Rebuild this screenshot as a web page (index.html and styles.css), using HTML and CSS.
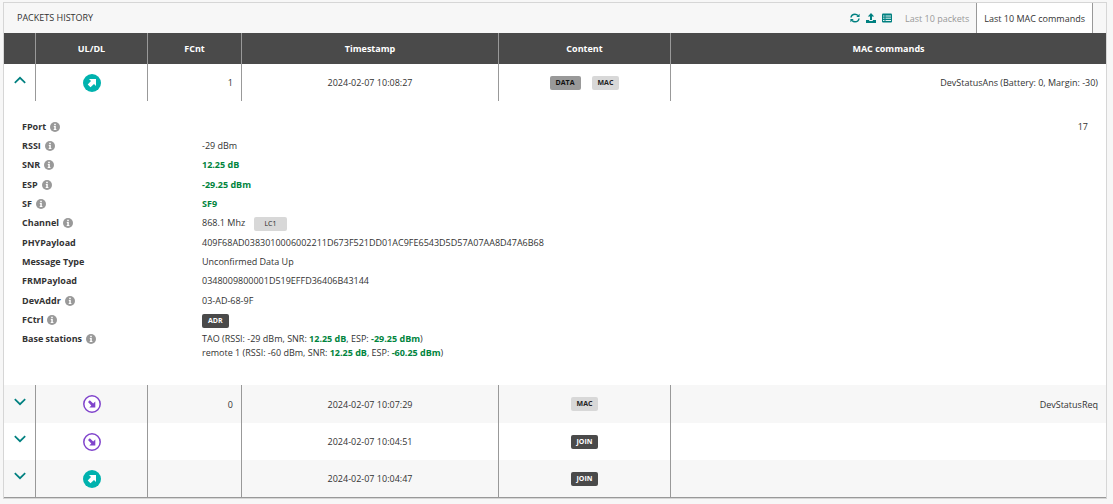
FILE: index.html
```html
<!DOCTYPE html>
<html lang="en">
<head>
  <meta charset="UTF-8" />
  <meta name="viewport" content="width=device-width, initial-scale=1.0" />
  <title>Packets history</title>
  <link rel="stylesheet" href="styles.css">
</head>
<body>
  <svg class="sprite" aria-hidden="true">
    <symbol id="up" viewBox="0 0 18 18">
      <circle cx="9" cy="9" r="9" fill="#00b2ae" />
      <path d="M6 5h7v7l-2-2-3.500 3.300-2.800-2.800L8 7z" fill="#fff" />
    </symbol>
    <symbol id="down" viewBox="0 0 18 18">
      <circle cx="9" cy="9" r="8.200" fill="#fff" stroke="#8044cc" stroke-width="1.500" />
      <path d="M6.800 5.200l3.400 3.400L12.300 6.500v6H6.300l2-2L5 7z" fill="#8044cc" />
    </symbol>
    <symbol id="info" viewBox="0 0 10 10">
      <circle cx="5" cy="5" r="5" fill="#999" />
      <path d="M4.200 1.800h1.600v1.400H4.200zM3.800 4h2v3h.6v1H3.700V7h.6V5h-.5z" fill="#fff" />
    </symbol>
    <symbol id="chevron" viewBox="0 0 12 8">
      <path d="M.8 1.200L6 6.200l5.200-5" fill="none" stroke="#008080" stroke-width="1.700" />
    </symbol>
  </svg>

  <section class="panel">
    <header class="panel-header">
      <h1>PACKETS HISTORY</h1>
      <div class="tools">
        <button class="icon-btn" type="button" aria-label="Refresh">
          <svg viewBox="0 0 10 10"><path d="M1 4.500C1.300 2.500 3 1.200 5 1.200c1.200 0 2.200.5 3 1.300M9 5.500C8.700 7.500 7 8.800 5 8.800c-1.200 0-2.200-.5-3-1.300" fill="none" stroke="#008080" stroke-width="1.500" /><path d="M9.600.7V4H6.300zM.4 9.300V6h3.300z" fill="#008080" /></svg>
        </button>
        <button class="icon-btn" type="button" aria-label="Export">
          <svg viewBox="0 0 10 10"><path d="M5 0l3.200 3.400H6V7H4V3.400H1.800zM0 7h3.200v1h3.600V7H10v3H0z" fill="#008080" /></svg>
        </button>
        <button class="icon-btn" type="button" aria-label="Table view">
          <svg viewBox="0 0 10 10"><rect y=".5" width="10" height="9" rx="1" fill="#008080" /><path d="M1 3h1.500M3.500 3H9M1 5.200h1.500M3.500 5.200H9M1 7.500h1.500M3.500 7.500H9" stroke="#fff" stroke-width=".9" /></svg>
        </button>
      </div>
      <nav class="tabs">
        <button class="tab" type="button">Last 10 packets</button>
        <button class="tab active" type="button">Last 10 MAC commands</button>
      </nav>
    </header>

    <table class="packets">
      <colgroup>
        <col class="col-toggle"><col class="col-dir"><col class="col-cnt"><col class="col-time"><col class="col-content"><col>
      </colgroup>
      <thead>
        <tr><th></th><th>UL/DL</th><th>FCnt</th><th>Timestamp</th><th>Content</th><th>MAC commands</th></tr>
      </thead>
      <tbody>
        <tr>
          <td><button class="toggle open" type="button" aria-label="Collapse"><svg><use href="#chevron" /></svg></button></td>
          <td><svg class="dir"><use href="#up" /></svg></td>
          <td class="num">1</td>
          <td>2024-02-07 10:08:27</td>
          <td><span class="badges"><span class="badge mid">DATA</span><span class="badge light">MAC</span></span></td>
          <td class="num">DevStatusAns (Battery: 0, Margin: -30)</td>
        </tr>
        <tr class="details">
          <td colspan="6">
            <dl>
              <dt>FPort <svg class="info"><use href="#info" /></svg></dt><dd class="port">17</dd>
              <dt>RSSI <svg class="info"><use href="#info" /></svg></dt><dd>-29 dBm</dd>
              <dt>SNR <svg class="info"><use href="#info" /></svg></dt><dd><b>12.25 dB</b></dd>
              <dt>ESP <svg class="info"><use href="#info" /></svg></dt><dd><b>-29.25 dBm</b></dd>
              <dt>SF <svg class="info"><use href="#info" /></svg></dt><dd><b>SF9</b></dd>
              <dt>Channel <svg class="info"><use href="#info" /></svg></dt><dd>868.1 Mhz <span class="badge light channel">LC1</span></dd>
              <dt>PHYPayload</dt><dd>409F68AD0383010006002211D673F521DD01AC9FE6543D5D57A07AA8D47A6B68</dd>
              <dt>Message Type</dt><dd>Unconfirmed Data Up</dd>
              <dt>FRMPayload</dt><dd>0348009800001D519EFFD36406B43144</dd>
              <dt>DevAddr <svg class="info"><use href="#info" /></svg></dt><dd>03-AD-68-9F</dd>
              <dt>FCtrl <svg class="info"><use href="#info" /></svg></dt><dd><span class="badge dark">ADR</span></dd>
              <dt>Base stations <svg class="info"><use href="#info" /></svg></dt>
              <dd class="stations">TAO (RSSI: -29 dBm, SNR: <b>12.25 dB</b>, ESP: <b>-29.25 dBm</b>)<br>remote 1 (RSSI: -60 dBm, SNR: <b>12.25 dB</b>, ESP: <b>-60.25 dBm</b>)</dd>
            </dl>
          </td>
        </tr>
        <tr class="alt">
          <td><button class="toggle" type="button" aria-label="Expand"><svg><use href="#chevron" /></svg></button></td>
          <td><svg class="dir"><use href="#down" /></svg></td>
          <td class="num">0</td>
          <td>2024-02-07 10:07:29</td>
          <td><span class="badge light">MAC</span></td>
          <td class="num">DevStatusReq</td>
        </tr>
        <tr>
          <td><button class="toggle" type="button" aria-label="Expand"><svg><use href="#chevron" /></svg></button></td>
          <td><svg class="dir"><use href="#down" /></svg></td>
          <td class="num"></td>
          <td>2024-02-07 10:04:51</td>
          <td><span class="badge dark">JOIN</span></td>
          <td class="num"></td>
        </tr>
        <tr class="alt">
          <td><button class="toggle" type="button" aria-label="Expand"><svg><use href="#chevron" /></svg></button></td>
          <td><svg class="dir"><use href="#up" /></svg></td>
          <td class="num"></td>
          <td>2024-02-07 10:04:47</td>
          <td><span class="badge dark">JOIN</span></td>
          <td class="num"></td>
        </tr>
      </tbody>
    </table>
  </section>
</body>
</html>
```
FILE: styles.css
```css
* {
  margin: 0;
  padding: 0;
  box-sizing: border-box;
}

body {
  font-family: "Open Sans", "Noto Sans", sans-serif;
  font-size: 9px;
  color: #333;
  background: #f7f7f7;
  padding: 2px 6px 5px 3px;
}

button {
  font: inherit;
  color: inherit;
  background: none;
  border: none;
  cursor: pointer;
}

svg {
  display: block;
}

.sprite {
  position: absolute;
  width: 0;
  height: 0;
}

.panel {
  border: 1px solid #d6d6d6;
}

.panel-header {
  display: flex;
  align-items: stretch;
  height: 30px;
  padding: 0 13px;
}

.panel-header h1 {
  flex: 1;
  font-size: 9px;
  font-weight: 400;
  line-height: 30px;
}

.tools {
  display: flex;
  align-items: center;
  gap: 6px;
  padding: 0 6px;
}

.icon-btn svg {
  width: 10px;
  height: 10px;
}

.tabs {
  display: flex;
}

.tab {
  padding: 0 7px;
  color: #999;
  white-space: nowrap;
}

.tab.active {
  color: #333;
  background: #fff;
  border-left: 1px solid #999;
  border-right: 1px solid #999;
}

.packets {
  width: 100%;
  table-layout: fixed;
  border-collapse: separate;
  border-spacing: 0;
  background: #fff;
  border-bottom: 1px solid #999;
}

.col-toggle { width: 32px; }
.col-dir { width: 112px; }
.col-cnt { width: 94px; }
.col-time { width: 257px; }
.col-content { width: 172px; }

th {
  height: 31px;
  color: #fff;
  background: #4a4a4a;
  font-weight: 700;
}

td {
  height: 37px;
  text-align: center;
  vertical-align: middle;
}

th:not(:last-child),
td:not(:last-child) {
  border-right: 1px solid #999;
}

.alt {
  background: #f7f7f7;
}

.num {
  text-align: right;
  padding-right: 8px;
}

.toggle {
  display: block;
  margin: 0 auto 5px;
}

.toggle svg {
  width: 12px;
  height: 8px;
}

.toggle.open svg {
  transform: rotate(180deg);
}

.dir {
  width: 18px;
  height: 18px;
  margin: 0 auto;
}

.badges {
  display: flex;
  justify-content: center;
  gap: 11px;
}

.badge {
  display: inline-block;
  padding: 0 6px;
  border-radius: 2px;
  font-size: 7px;
  font-weight: 700;
  line-height: 14px;
  vertical-align: middle;
}

.light {
  color: #222;
  background: #d8d8d8;
}

.mid {
  color: #111;
  background: #999;
}

.dark {
  color: #fff;
  background: #4a4a4a;
}

.details td {
  padding: 16px 18px 25px;
  text-align: left;
}

.details + tr td {
  height: 38px;
}

dl {
  display: grid;
  grid-template-columns: 180px 1fr;
  grid-template-rows: repeat(3, 19px 19px 20px) 19px 19px auto;
  line-height: 19px;
}

dt {
  display: flex;
  align-items: center;
  gap: 4px;
  height: 19px;
  font-weight: 700;
}

b {
  color: #00843d;
  font-weight: 700;
}

.info {
  width: 10px;
  height: 10px;
}

.port {
  text-align: right;
}

.channel {
  margin-left: 7px;
  padding: 0 10px;
  font-weight: 400;
}

.stations {
  line-height: 14px;
  padding-top: 3px;
}
```
